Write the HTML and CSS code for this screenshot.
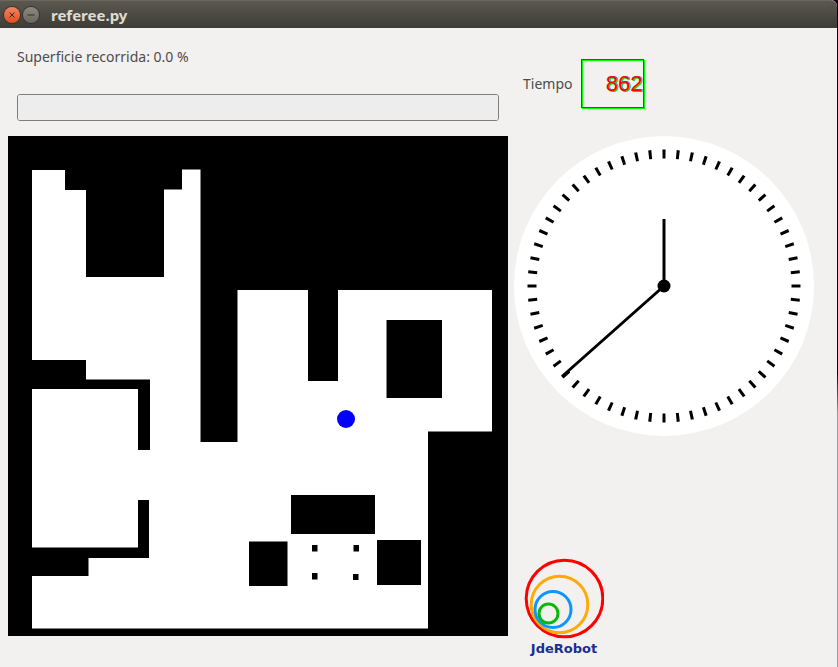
FILE: index.html
```html
<!DOCTYPE html>
<html lang="es">
<head>
<meta charset="utf-8">
<title>referee.py</title>
<link rel="stylesheet" href="styles.css">
</head>
<body>
<div class="window">
  <header class="titlebar">
    <button class="window-button close" type="button" aria-label="Cerrar">
      <svg viewBox="0 0 16 16"><path d="M5.500 5.500l5 5M10.500 5.500l-5 5"/></svg>
    </button>
    <button class="window-button minimize" type="button" aria-label="Minimizar">
      <svg viewBox="0 0 16 16"><path d="M4.500 8h7"/></svg>
    </button>
    <h1 class="title">referee.py</h1>
  </header>
  <main class="content">
    <section class="coverage">
      <label for="surface">Superficie recorrida: 0.0 %</label>
      <progress id="surface" class="bar" value="0" max="100"></progress>
    </section>
    <section class="timer">
      <label for="time">Tiempo</label>
      <output id="time" class="lcd">862</output>
    </section>
    <svg class="map" viewBox="0 0 500 500" role="img" aria-label="Mapa">
      <rect width="500" height="500"/>
      <path fill="#fff" d="M24 34H57V54H78V141H156V53.500H174V33.500H192.500V306H229.500V154H300V245H330V154H484V295.500H420V492.500H24V440H80.500V422H141V364H130V411.500H24V253H130V314H142V243.500H78V224H24Z"/>
      <rect x="378.500" y="184" width="55.500" height="78"/>
      <rect x="283" y="359" width="84" height="39"/>
      <rect x="241" y="405.500" width="38.500" height="44.500"/>
      <rect x="369" y="404" width="44" height="45"/>
      <rect x="304" y="409" width="5.500" height="6.500"/>
      <rect x="345.500" y="409" width="5.500" height="6.500"/>
      <rect x="304" y="437" width="5.500" height="6.500"/>
      <rect x="345" y="438" width="5.500" height="6"/>
      <circle cx="338" cy="283" r="9" fill="#00f"/>
    </svg>
    <aside class="side">
      <svg class="clock" viewBox="0 0 300 300" role="img" aria-label="Reloj">
        <circle cx="150" cy="150" r="150" fill="#fff"/>
        <circle class="ticks" cx="150" cy="150" r="132" pathLength="600"/>
        <path class="hands" d="M150 150V83M150 150L48 240.500"/>
        <circle cx="150" cy="150" r="6.500"/>
      </svg>
      <figure class="logo">
        <svg viewBox="0 0 80 82" aria-hidden="true">
          <circle cx="40.500" cy="40.500" r="38.300" stroke="#f00"/>
          <circle cx="35.500" cy="46.500" r="28.300" stroke="#ffa90a"/>
          <circle cx="29" cy="51.500" r="18" stroke="#0d96ff"/>
          <circle cx="24.500" cy="55.500" r="9.500" stroke="#0ab80a"/>
        </svg>
        <figcaption>JdeRobot</figcaption>
      </figure>
    </aside>
  </main>
</div>
</body>
</html>
```
FILE: styles.css
```css
* {
  box-sizing: border-box;
}

body {
  margin: 0;
  background: linear-gradient(#16000f 0 56%, #999 62%);
  color: #4c4c4c;
  font: 14px/20px "Noto Sans", sans-serif;
}

.window {
  display: flex;
  flex-direction: column;
  min-height: 100vh;
  margin-right: 1px;
  background: #f2f1f0;
  border-radius: 0 6px 0 0;
}

.titlebar {
  display: flex;
  align-items: center;
  gap: 3px;
  height: 28px;
  padding: 0 4px;
  background: linear-gradient(#5b584f, #3d3c37);
  border-top: 1px solid #6a675e;
  border-radius: 0 6px 0 0;
}

.window-button {
  width: 16px;
  height: 16px;
  padding: 0;
  border: 0;
  border-radius: 50%;
  box-shadow: 0 0 0 1px #33322e;
}

.window-button svg {
  display: block;
  fill: none;
  stroke: #3a2b22;
  stroke-width: 1;
}

.close {
  background: linear-gradient(#f58562, #e24e1b);
}

.minimize {
  background: linear-gradient(#8b897f, #68665e);
}

.title {
  margin: 0 0 0 9px;
  color: #dfdbd2;
  font-size: 15px;
  font-weight: 700;
  line-height: 18px;
}

.content {
  flex: 1;
  display: grid;
  grid-template-columns: 500fr 300fr;
  grid-template-rows: 108px 1fr;
  column-gap: 6px;
  padding: 0 23px 9px 8px;
}

.coverage {
  display: flex;
  flex-direction: column;
  gap: 27px;
  padding: 19px 9px 0;
}

.bar {
  appearance: none;
  width: 100%;
  height: 27px;
  border: 1px solid #7f7d7b;
  border-radius: 3px;
  background: #ededed;
  overflow: hidden;
}

.bar::-webkit-progress-bar {
  background: #ededed;
}

.bar::-webkit-progress-value {
  background: #f07746;
}

.timer {
  display: flex;
  align-items: center;
  gap: 9px;
  padding: 3px 9px 0;
}

.lcd {
  width: 63px;
  height: 49px;
  padding-right: 1px;
  border: 1px solid #f00;
  box-shadow: 1px 1px #0f0, inset 1px 1px #0f0;
  color: #f00;
  font: 22px/48px "Liberation Sans", sans-serif;
  text-align: right;
  text-shadow: 1px 1px #0d0, 1px 0 #44f;
}

.map,
.clock {
  display: block;
  width: 100%;
}

.side {
  display: flex;
  flex-direction: column;
  justify-content: space-between;
}

.ticks {
  fill: none;
  stroke: #000;
  stroke-width: 9;
  stroke-dasharray: 2.2 7.8;
  stroke-dashoffset: 1.1;
}

.hands {
  fill: none;
  stroke: #000;
  stroke-width: 3;
}

.logo {
  width: 80px;
  margin: 0 0 0 10px;
  color: #1a2f94;
  font: bold 13px/18px "DejaVu Sans", sans-serif;
  text-align: center;
}

.logo svg {
  display: block;
  fill: none;
  stroke-width: 3;
}
```
